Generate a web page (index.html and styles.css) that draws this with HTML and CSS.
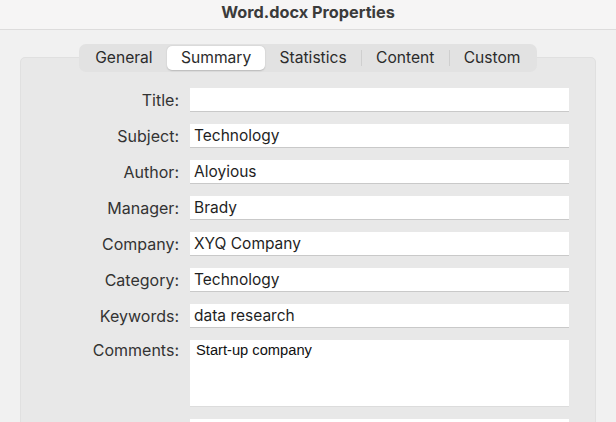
FILE: index.html
```html
<!DOCTYPE html>
<html>
<head>
<meta charset="utf-8">
<link rel="stylesheet" href="styles.css">
</head>
<body>
<div class="window">
  <div class="titlebar">Word.docx Properties</div>
  <div class="content">
    <div class="tabs">
      <div class="tab">General</div>
      <div class="tab selected">Summary</div>
      <div class="tab">Statistics</div>
      <div class="sep"></div>
      <div class="tab">Content</div>
      <div class="sep"></div>
      <div class="tab">Custom</div>
    </div>
    <div class="panel">
      <div class="form">
        <div class="label">Title:</div><div class="field"></div>
        <div class="label">Subject:</div><div class="field">Technology</div>
        <div class="label">Author:</div><div class="field">Aloyious</div>
        <div class="label">Manager:</div><div class="field">Brady</div>
        <div class="label">Company:</div><div class="field">XYQ Company</div>
        <div class="label">Category:</div><div class="field">Technology</div>
        <div class="label">Keywords:</div><div class="field">data research</div>
        <div class="label top">Comments:</div><div class="field area">Start-up company</div>
        <div class="label"></div><div class="field"></div>
      </div>
    </div>
  </div>
</div>
</body>
</html>
```
FILE: styles.css
```css
html, body {
  margin: 0;
  padding: 0;
  background: #f1f1f1;
  font-family: "Inter", "Liberation Sans", sans-serif;
  overflow: hidden;
}
.window {
  width: 616px;
  height: 422px;
  overflow: hidden;
}
.titlebar {
  height: 29px;
  line-height: 24px;
  background: #f6f5f5;
  border-bottom: 1px solid #dddcdc;
  text-align: center;
  font-weight: 700;
  font-size: 16.3px;
  color: #3b3b3b;
}
.content {
  padding: 14px 20px 0 20px;
}
.tabs {
  position: relative;
  z-index: 1;
  display: flex;
  align-items: center;
  width: fit-content;
  margin: 0 auto 0 59px;
  height: 28px;
  padding: 0 2px;
  box-sizing: border-box;
  background: #e2e2e2;
  border-radius: 7px;
}
.tab {
  font-size: 15.6px;
  color: #2b2b2b;
  padding: 0 14.2px;
  height: 24px;
  line-height: 24px;
  border-radius: 5px;
}
.tab.selected {
  background: #ffffff;
  box-shadow: 0 0.5px 1.5px rgba(0,0,0,0.18);
}
.sep {
  width: 1px;
  height: 16px;
  background: #cfcfcf;
}
.panel {
  margin-top: -15px;
  background: #e8e8e8;
  border: 1px solid #e0e0e0;
  border-radius: 5px;
  height: 400px;
  padding: 30px 26px 0 0;
}
.form {
  display: grid;
  grid-template-columns: 158px 379px;
  column-gap: 11px;
  row-gap: 12px;
}
.label {
  font-size: 16px;
  color: #333333;
  text-align: right;
  height: 24px;
  line-height: 24px;
}
.label.top {
  line-height: 20px;
}
.field {
  height: 24px;
  line-height: 23px;
  background: #ffffff;
  border-bottom: 1px solid #c9c9c9;
  box-sizing: border-box;
  padding-left: 4px;
  font-size: 15.5px;
  color: #1f1f1f;
}
.field.area {
  height: 67px;
  line-height: 18px;
  padding: 1px 0 0 6px;
  border-bottom: 1px solid #dcdcdc;
  font-family: "Liberation Sans", sans-serif;
  font-size: 14.7px;
  color: #111111;
}
```
